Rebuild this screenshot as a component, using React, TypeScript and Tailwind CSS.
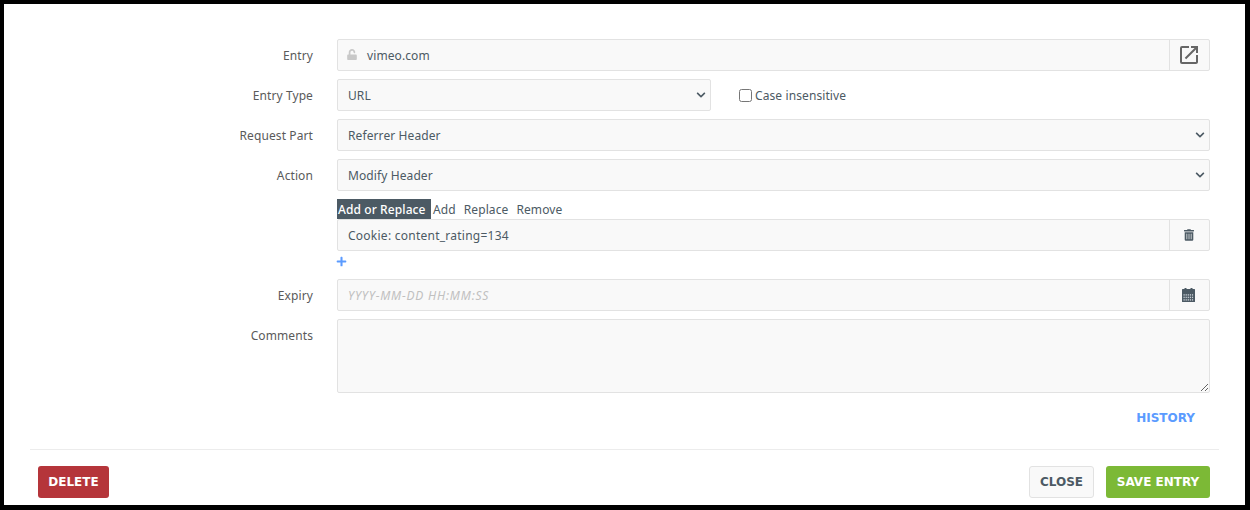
import { FaChevronDown, FaPlus, FaTrashAlt, FaUnlock } from 'react-icons/fa'
import { MdOpenInNew } from 'react-icons/md'

const FONT = "font-['Noto_Sans','DejaVu_Sans',sans-serif] tracking-[0.1px]"
const BOLD = "font-['DejaVu_Sans',sans-serif] font-bold tracking-normal"

// ── shared bits ──────────────────────────────────────────────────

const fieldBox = 'h-8 border border-[#e2e2e2] rounded-[2px] bg-[#f9f9f9] text-xs text-[#4c5a64]'

function Row({ label, children }: { label?: string; children: React.ReactNode }) {
  return (
    <div className="flex">
      <label className="w-[309px] shrink-0 h-8 pt-[2px] flex items-center justify-end text-xs text-[#5a5a5a]">{label}</label>
      <div className="ml-6 flex-1 min-w-0">{children}</div>
    </div>
  )
}

function Select({ value, className = '' }: { value: string; className?: string }) {
  return (
    <div className={`relative ${className}`}>
      <select defaultValue={value} className={`${fieldBox} w-full appearance-none pl-[10px] pt-[2px] outline-none`}>
        <option>{value}</option>
      </select>
      <FaChevronDown className="absolute right-[5px] top-[11px] w-[10px] h-[10px] text-[#4c5a64] pointer-events-none" />
    </div>
  )
}

function InputGroup({ children, addon }: { children: React.ReactNode; addon: React.ReactNode }) {
  return (
    <div className={`${fieldBox} flex items-stretch`}>
      <div className="flex-1 min-w-0 flex items-center pl-[10px] pt-[2px]">{children}</div>
      <div className="w-10 pr-[2px] border-l border-[#e2e2e2] flex items-center justify-center">{addon}</div>
    </div>
  )
}

function CalendarIcon() {
  const cells = []
  for (let r = 0; r < 3; r++) {
    for (let c = 0; c < 5; c++) {
      cells.push(<rect key={`${r}-${c}`} x={1.5 + c * 2.1} y={6.2 + r * 2.5} width="1.2" height="1.4" fill="#c9d0d6" />)
    }
  }
  return (
    <svg width="13" height="14" viewBox="0 0 13 14">
      <rect x="2.5" y="0" width="2" height="2" fill="#4c5a64" />
      <rect x="8.5" y="0" width="2" height="2" fill="#4c5a64" />
      <rect x="0" y="1" width="13" height="13" rx="0.5" fill="#4c5a64" />
      {cells}
    </svg>
  )
}

export default function App() {
  return (
    <div className={`${FONT} w-full h-[510px] bg-white border-l-4 border-t-4 border-r-[5px] border-b-[5px] border-black overflow-hidden`}>
      <div className="pt-[35px] pr-[35px] flex flex-col gap-2">
        <Row label="Entry">
          <InputGroup addon={<MdOpenInNew className="w-[24px] h-[24px] text-[#666]" />}>
            <FaUnlock className="w-[10px] h-[11px] -ml-px mb-[4px] text-[#c8c8c8]" />
            <span className="ml-[10px]">vimeo.com</span>
          </InputGroup>
        </Row>

        <Row label="Entry Type">
          <div className="flex items-center">
            <Select value="URL" className="w-[374px]" />
            <label className="ml-7 pt-[2px] flex items-center gap-[3px] text-xs text-[#4c5a64]">
              <input type="checkbox" className="w-[13px] h-[13px] m-0 -mt-[2px]" />
              Case insensitive
            </label>
          </div>
        </Row>

        <Row label="Request Part">
          <Select value="Referrer Header" />
        </Row>

        <Row label="Action">
          <Select value="Modify Header" />
        </Row>

        <div className="flex">
          <div className="w-[309px] shrink-0" />
          <div className="ml-6 flex-1 min-w-0">
            <div className="h-5 flex items-center text-xs text-[#4c5a64]">
              <span className="h-5 w-[94px] pt-[2px] flex items-center pl-[1px] bg-[#4c5a64] text-white font-medium">Add or Replace</span>
              <span className="ml-[2px] pt-[2px]">Add</span>
              <span className="ml-2 pt-[2px]">Replace</span>
              <span className="ml-2 pt-[2px]">Remove</span>
            </div>
            <InputGroup addon={<FaTrashAlt className="w-[10px] h-[12px] text-[#4c5a64]" />}>
              <span className="tracking-[0.25px]">Cookie: content_rating=134</span>
            </InputGroup>
            <div className="h-5 flex items-center">
              <FaPlus className="w-[11px] h-[11px] -ml-px text-[#5b9bff]" />
            </div>
          </div>
        </div>

        <Row label="Expiry">
          <InputGroup addon={<CalendarIcon />}>
            <span className="italic tracking-[0.8px] text-[#c0c0c0]">YYYY-MM-DD HH:MM:SS</span>
          </InputGroup>
        </Row>

        <Row label="Comments">
          <textarea className={`${fieldBox} block w-full h-[74px] outline-none`} />
        </Row>
      </div>

      <div className={`${BOLD} mt-[15px] pr-[50px] flex justify-end h-[20px] items-center text-xs tracking-[0.3px] text-[#5b9bff]`}>HISTORY</div>

      <div className="mt-[21px] ml-[26px] mr-[26px] border-t border-[#ececec]" />

      <div className={`${BOLD} mt-4 ml-[34px] mr-[35px] flex items-center text-xs`}>
        <button className="h-8 w-[71px] rounded-[3px] bg-[#b5353a] text-white">DELETE</button>
        <button className="ml-auto h-8 w-[65px] rounded-[3px] border border-[#e2e2e2] bg-[#f9f9f9] text-[#4c5a64]">CLOSE</button>
        <button className="ml-3 h-8 w-[104px] rounded-[3px] bg-[#7cb936] text-white">SAVE ENTRY</button>
      </div>
    </div>
  )
}
